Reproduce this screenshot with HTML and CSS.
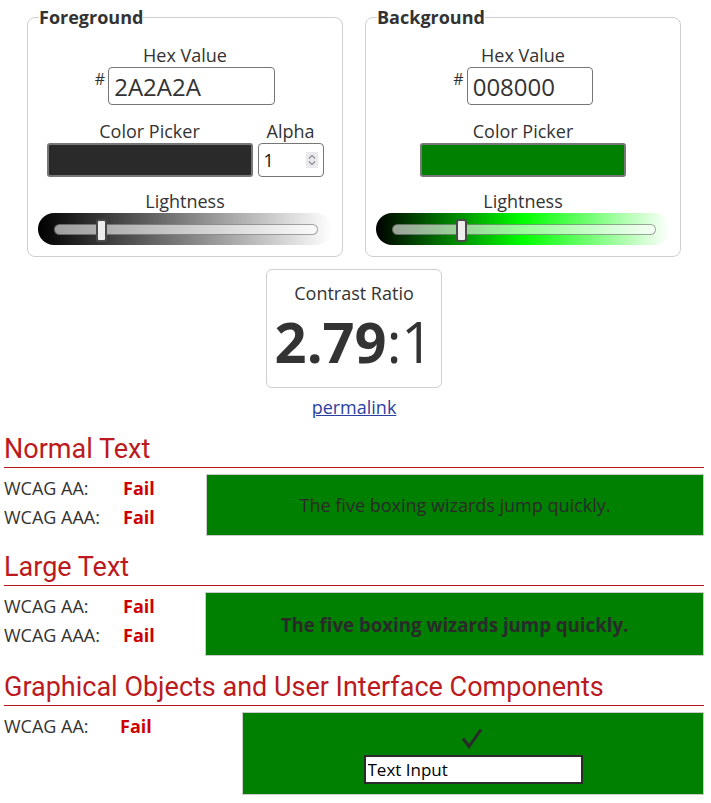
FILE: index.html
```html
<!DOCTYPE html>
<html lang="en">
<head>
<meta charset="utf-8">
<title>Contrast Checker</title>
<link rel="stylesheet" href="styles.css">
</head>
<body>
<main class="page">
  <div class="pickers">
    <fieldset class="colorset">
      <legend>Foreground</legend>
      <div class="field-label hex-label">Hex Value</div>
      <div class="hex-row"><span class="hash">#</span><input class="hex-input" type="text" value="2A2A2A"></div>
      <div class="picker-row">
        <div class="picker-col">
          <div class="field-label">Color Picker</div>
          <div class="swatch swatch-fg"></div>
        </div>
        <div class="alpha-col">
          <div class="field-label">Alpha</div>
          <div class="alpha-input"><span>1</span>
            <svg class="spin" width="12" height="16" viewBox="0 0 12 16"><rect width="12" height="16" fill="#e9e9ed"/><path d="M3 6.5 6 3.5 9 6.5M3 9.5 6 12.5 9 9.5" fill="none" stroke="#8a8a8a" stroke-width="1.1"/></svg>
          </div>
        </div>
      </div>
      <div class="field-label light-label">Lightness</div>
      <div class="slider slider-fg"><div class="track"><div class="thumb thumb-fg"></div></div></div>
    </fieldset>
    <fieldset class="colorset">
      <legend>Background</legend>
      <div class="field-label hex-label">Hex Value</div>
      <div class="hex-row"><span class="hash">#</span><input class="hex-input hex-short" type="text" value="008000"></div>
      <div class="picker-row">
        <div class="picker-col">
          <div class="field-label">Color Picker</div>
          <div class="swatch swatch-bg"></div>
        </div>
      </div>
      <div class="field-label light-label">Lightness</div>
      <div class="slider slider-bg"><div class="track"><div class="thumb thumb-bg"></div></div></div>
    </fieldset>
  </div>

  <div class="ratio-box">
    <div class="ratio-label">Contrast Ratio</div>
    <div class="ratio"><b>2.79</b>:1</div>
  </div>
  <div class="permalink-row"><a href="#" class="permalink">permalink</a></div>

  <section class="result result-first">
    <h2>Normal Text</h2>
    <div class="result-row">
      <div class="levels">
        <div class="level"><span class="lvl-name">WCAG AA:</span><span class="fail">Fail</span></div>
        <div class="level"><span class="lvl-name">WCAG AAA:</span><span class="fail">Fail</span></div>
      </div>
      <div class="sample sample-normal">The five boxing wizards jump quickly.</div>
    </div>
  </section>

  <section class="result">
    <h2>Large Text</h2>
    <div class="result-row">
      <div class="levels levels-large">
        <div class="level"><span class="lvl-name">WCAG AA:</span><span class="fail">Fail</span></div>
        <div class="level"><span class="lvl-name">WCAG AAA:</span><span class="fail">Fail</span></div>
      </div>
      <div class="sample sample-large">The five boxing wizards jump quickly.</div>
    </div>
  </section>

  <section class="result">
    <h2>Graphical Objects and User Interface Components</h2>
    <div class="result-row">
      <div class="levels levels-ui">
        <div class="level"><span class="lvl-name lvl-ui">WCAG AA:</span><span class="fail">Fail</span></div>
      </div>
      <div class="sample sample-ui">
        <svg class="check" width="22" height="21" viewBox="0 0 22 21" role="img" aria-label="check mark"><path d="M2 10.5 8 18.5 20 1.5" fill="none" stroke="#2a2a2a" stroke-width="3" stroke-linejoin="miter" stroke-linecap="butt"/></svg>
        <input class="ui-input" type="text" value="Text Input">
      </div>
    </div>
  </section>
</main>
</body>
</html>
```

FILE: styles.css
```css
* { box-sizing: border-box; }

html, body {
  margin: 0;
  padding: 0;
  background: #fff;
}

body {
  font-family: "Open Sans", "DejaVu Sans", sans-serif;
  font-size: 18px;
  color: #333;
}

.page {
  width: 700px;
  margin-left: 4px;
  padding-top: 5px;
}

.pickers {
  display: flex;
  justify-content: center;
  gap: 22px;
}

.colorset {
  width: 316px;
  margin: 0;
  padding: 0 11px 10px;
  border: 1px solid #cfcfcf;
  border-radius: 8px;
  display: flex;
  flex-direction: column;
  align-items: center;
  min-width: 0;
}

.colorset legend {
  font-weight: 700;
  font-size: 18px;
  line-height: 24px;
  padding: 0;
  color: #333;
}

.field-label {
  line-height: 24px;
  text-align: center;
}

.hex-label {
  margin-top: 14px;
}

.light-label {
  margin-top: 12px;
}

.hex-row {
  display: flex;
  align-items: flex-start;
}

.hash {
  font-size: 16px;
  line-height: 16px;
  margin-top: 4px;
  margin-right: 3px;
}

.hex-input {
  width: 167px;
  height: 38px;
  border: 1px solid #767676;
  border-radius: 4px;
  font-family: "Open Sans", sans-serif;
  font-size: 24px;
  color: #333;
  padding: 0 5px;
  margin: 0;
}

.hex-short {
  width: 126px;
}

.picker-row {
  display: flex;
  gap: 5px;
  margin-top: 14px;
}

.picker-col, .alpha-col {
  display: flex;
  flex-direction: column;
  align-items: center;
}

.swatch {
  width: 206px;
  height: 34px;
  border: 2px solid #777;
  border-radius: 3px;
}

.swatch-fg { background: #2a2a2a; }
.swatch-bg { background: #008000; }

.alpha-input {
  width: 66px;
  height: 34px;
  border: 1px solid #767676;
  border-radius: 4px;
  display: flex;
  align-items: center;
  justify-content: space-between;
  padding: 0 5px;
  font-size: 18px;
  color: #111;
}

.spin { display: block; }

.slider {
  width: 294px;
  height: 32px;
  margin-bottom: 1px;
  border-radius: 16px;
  padding: 11px 14px 0 16px;
}

.slider-fg { background: linear-gradient(to right, #000 0%, #fff 100%); }
.slider-bg { background: linear-gradient(to right, #000 0%, #0f0 50%, #fff 100%); }

.track {
  position: relative;
  height: 11px;
  border-radius: 6px;
  border: 1px solid rgba(0, 0, 0, 0.35);
  background: rgba(255, 255, 255, 0.6);
}

.thumb {
  position: absolute;
  top: -6px;
  width: 11px;
  height: 23px;
  background: #eee;
  border: 2px solid #4a4a4a;
  border-radius: 3px;
}

.thumb-fg { left: 41px; }
.thumb-bg { left: 63px; }

.ratio-box {
  width: 176px;
  height: 119px;
  margin: 12px auto 0;
  border: 1px solid #cfcfcf;
  border-radius: 6px;
  text-align: center;
  padding-top: 11px;
}

.ratio-label {
  line-height: 24px;
}

.ratio {
  font-size: 56px;
  line-height: 70px;
  margin-top: 1px;
  color: #333;
}

.ratio b { font-weight: 700; }

.permalink-row {
  text-align: center;
  margin-top: 7px;
  line-height: 24px;
}

.permalink {
  color: #2b3fa0;
  text-decoration: underline;
}

.result h2 {
  font-family: Roboto, "Liberation Sans", sans-serif;
  font-weight: 400;
  font-size: 27px;
  line-height: 32px;
  color: #bb1a20;
  margin: 15px 0 0;
  padding-bottom: 2px;
  border-bottom: 1px solid #b5161c;
}

.result-first h2 { margin-top: 14px; }

.result-row {
  display: flex;
  margin-top: 6px;
}

.levels {
  width: 202px;
  flex: none;
}

.levels-large { width: 201px; }
.levels-ui { width: 238px; }

.level {
  display: flex;
  line-height: 29px;
}

.lvl-name {
  width: 119px;
}

.lvl-ui { width: 116px; }

.fail {
  color: #cc0000;
  font-weight: 700;
}

.sample {
  flex: 1;
  background: #008000;
  border: 1px solid #cccccc;
  color: #2a2a2a;
  display: flex;
  align-items: center;
  justify-content: center;
}

.sample-normal {
  height: 62px;
  font-size: 18px;
}

.sample-large {
  height: 64px;
  font-size: 18.67px;
  font-weight: 700;
}

.sample-ui {
  height: 83px;
  flex-direction: column;
  justify-content: flex-start;
  padding-top: 15px;
}

.check {
  display: block;
  margin-left: -2px;
}

.ui-input {
  width: 219px;
  height: 29px;
  border: 2px solid #2a2a2a;
  background: #fff;
  font-family: "Open Sans", sans-serif;
  font-size: 17px;
  color: #000;
  padding: 0 2px;
  margin-top: 6px;
}
```
